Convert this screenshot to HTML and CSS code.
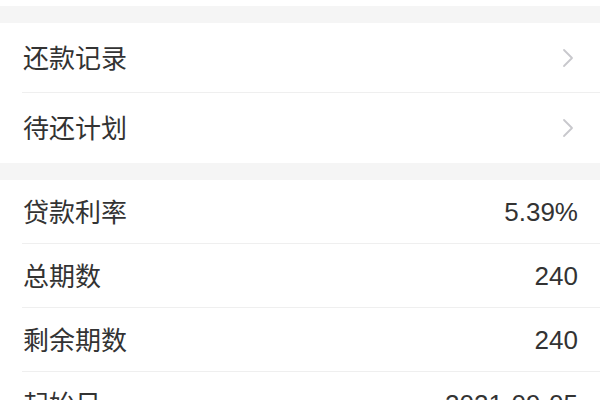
FILE: index.html
```html
<!DOCTYPE html>
<html lang="zh-CN">
<head>
<meta charset="utf-8">
<title>贷款详情</title>
<link rel="stylesheet" href="styles.css">
</head>
<body>
<div class="top-strip"></div>
<div class="gap"></div>
<section class="group">
  <div class="row row-tall">
    <div class="row-inner">
      <span class="label">还款记录</span>
      <svg class="chevron" viewBox="0 0 12 20" width="12" height="20"><path d="M2 2 L10 10 L2 18" fill="none" stroke="#c8c8cc" stroke-width="1.8" stroke-linecap="round" stroke-linejoin="round"/></svg>
    </div>
  </div>
  <div class="row row-tall last">
    <div class="row-inner">
      <span class="label">待还计划</span>
      <svg class="chevron" viewBox="0 0 12 20" width="12" height="20"><path d="M2 2 L10 10 L2 18" fill="none" stroke="#c8c8cc" stroke-width="1.8" stroke-linecap="round" stroke-linejoin="round"/></svg>
    </div>
  </div>
</section>
<div class="gap"></div>
<section class="group">
  <div class="row">
    <div class="row-inner">
      <span class="label">贷款利率</span>
      <span class="value">5.39%</span>
    </div>
  </div>
  <div class="row">
    <div class="row-inner">
      <span class="label">总期数</span>
      <span class="value">240</span>
    </div>
  </div>
  <div class="row">
    <div class="row-inner">
      <span class="label">剩余期数</span>
      <span class="value">240</span>
    </div>
  </div>
  <div class="row">
    <div class="row-inner">
      <span class="label">起始日</span>
      <span class="value">2021-09-05</span>
    </div>
  </div>
</section>
</body>
</html>
```
FILE: styles.css
```css
html, body {
  margin: 0;
  padding: 0;
  background: #ffffff;
}
body {
  width: 600px;
  height: 400px;
  overflow: hidden;
  font-family: "Liberation Sans", "Noto Sans CJK SC", sans-serif;
  color: #333333;
}
.top-strip {
  height: 6px;
  background: #ffffff;
}
.gap {
  height: 17px;
  background: #f5f5f5;
}
.group {
  background: #ffffff;
}
.row {
  padding-left: 22px;
}
.row-inner {
  display: flex;
  align-items: center;
  justify-content: space-between;
  height: 63px;
  padding-right: 23px;
  border-bottom: 1px solid #efefef;
}
.row-tall .row-inner {
  height: 69px;
}
.row.last .row-inner {
  height: 70px;
  border-bottom: none;
}
.label {
  font-size: 26px;
  font-family: "Noto Sans CJK SC", sans-serif;
  padding-left: 1px;
  color: #333333;
  line-height: 1;
  margin-top: -2px;
}
.value {
  font-size: 26px;
  line-height: 1;
  color: #333333;
  margin-right: -1px;
}
.chevron {
  display: block;
  margin-right: 3px;
}
```
